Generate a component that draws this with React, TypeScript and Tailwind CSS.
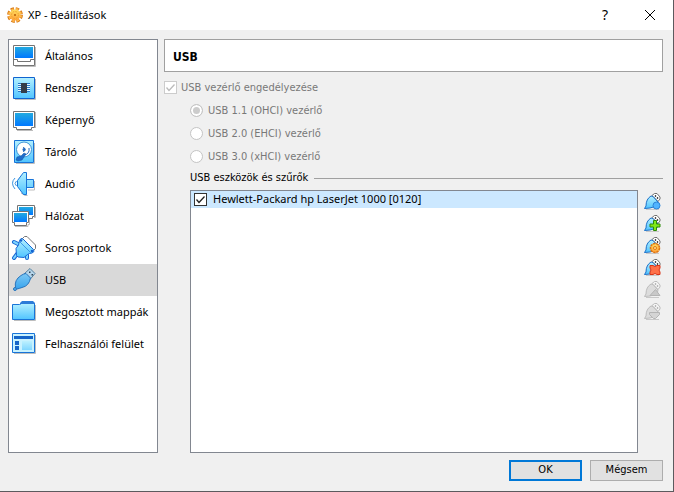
import { useState, type ReactNode } from 'react';

type IconProps = { children: ReactNode };

function Icon({ children }: IconProps) {
  return (
    <svg viewBox="0 0 24 24" className="size-6 shrink-0 overflow-visible" fill="none" aria-hidden="true">
      {children}
    </svg>
  );
}

function Gradients() {
  return (
    <svg className="absolute size-0" aria-hidden="true">
      <defs>
        <linearGradient id="screen" x1="0" y1="0" x2="0" y2="1">
          <stop offset="0" stopColor="#22aae0" />
          <stop offset="1" stopColor="#0078ff" />
        </linearGradient>
        <linearGradient id="cyan" x1="0" y1="0" x2="0" y2="1">
          <stop offset="0" stopColor="#b4f0ff" />
          <stop offset="1" stopColor="#50c4ff" />
        </linearGradient>
        <linearGradient id="plug" x1="0" y1="0" x2="0" y2="1">
          <stop offset="0" stopColor="#7cc8f4" />
          <stop offset="1" stopColor="#38a4ee" />
        </linearGradient>
        <linearGradient id="orange" x1="0" y1="0" x2="0" y2="1">
          <stop offset="0" stopColor="#ffe060" />
          <stop offset="1" stopColor="#ffa038" />
        </linearGradient>
      </defs>
    </svg>
  );
}

const icons = {
  general: (
    <Icon>
      <path d="M3 22.500h20.500V3" stroke="#bdbdbd" />
      <path d="M1.500 1.500h21v20h-21z" fill="#fff" stroke="#747474" />
      <path d="M3 3h18v11H3z" fill="url(#screen)" />
      <path d="M2 15.500h3.500v2h13v-2H22" stroke="#747474" />
    </Icon>
  ),
  system: (
    <Icon>
      <path d="M3 23.500h20.500V3" stroke="#bdbdbd" />
      <path d="M1.500 1.500h21v21h-21z" fill="url(#cyan)" stroke="#1064d0" />
      <path d="M6 7.500h12M6 9.500h12M6 11.500h12M6 13.500h12M6 15.500h12" stroke="#2878c8" />
      <path d="M6 8.500h12M6 10.500h12M6 12.500h12M6 14.500h12" stroke="#e0f8ff" />
      <path d="M9 7h6v10H9z" fill="#343c48" />
    </Icon>
  ),
  display: (
    <Icon>
      <path d="M5 22.500h16M23.500 4v16" stroke="#bdbdbd" />
      <path d="M1.500 3.500h21v16h-3v2h-15v-2h-3z" fill="#fff" stroke="#747474" />
      <path d="M3 5h18v13H3z" fill="url(#screen)" />
    </Icon>
  ),
  storage: (
    <Icon>
      <path d="M4 23.500h18.500V3" stroke="#bdbdbd" />
      <path d="M2.500 .5h19v22h-19z" fill="url(#cyan)" stroke="#1874d8" />
      <circle cx="12" cy="9.500" r="7.500" fill="#fff" stroke="#3c94d8" />
      <path d="M11 7.500a2 2 0 1 1 0 4M12 15q6-1 5-7" stroke="#2068c0" />
      <circle cx="12" cy="9.500" r="1.500" fill="#2068c0" />
      <path d="m4 20 1-3 4-1 3-3 2 1-2 3-2 3-4 1z" fill="#1c6ccc" stroke="#104c98" strokeWidth=".5" />
    </Icon>
  ),
  audio: (
    <Icon>
      <path d="m9 21 4 2.500h2.500M16 18h6.500V9" stroke="#bdbdbd" />
      <path d="M5.500 8.500 11.500 .5h3v22h-3l-6-8zM14.500 7.500h7v8h-7z" fill="url(#cyan)" stroke="#1874d8" />
      <path d="M3 6q-5 5 0 11M4.500 9q-3 2.500 0 5" stroke="#3c94e0" />
    </Icon>
  ),
  network: (
    <Icon>
      <path d="M23.500 3v10.500H22M17.500 12v8.500H16v2H3" stroke="#bdbdbd" />
      <path d="M5.500 1.500h17v11h-2v2h-13v-2h-2z" fill="#fff" stroke="#747474" />
      <path d="M7 3h14v8H7z" fill="url(#screen)" />
      <path d="M.5 7.500h16v11h-2v3h-12v-3h-2z" fill="#fff" stroke="#747474" />
      <path d="M2 9h13v9H2z" fill="url(#screen)" />
    </Icon>
  ),
  serial: (
    <Icon>
      <path d="M10 3 12.500.5H15L23.500 9v3.500l-3 3z" fill="#fff" stroke="#777" />
      <path d="m2 6 4 2M15 19v3M5 18l-3 4" stroke="#1868d4" strokeWidth="4" strokeLinecap="round" />
      <path d="m2 6 4 2M15 19v3M5 18l-3 4" stroke="#7cd4ff" strokeWidth="2" strokeLinecap="round" />
      <path
        d="M7.500 4.500 9 2.500l2 .5 10.500 10.500.5 2-2 1.500-2.500.5-2 1-3.500 3-6-.5-1.500-1.500-.5-7L6.500 9z"
        fill="url(#cyan)"
        stroke="#1868d4"
      />
      <path d="m8 6 11 11" stroke="#3c98e8" />
      <circle cx="9" cy="4.500" r="1.300" fill="#1464d0" />
      <circle cx="20" cy="15" r="1.300" fill="#1464d0" />
    </Icon>
  ),
  usb: (
    <Icon>
      <path d="m12 6 6-5.500 5 5-5 6z" fill="#b5d5ea" stroke="#54809f" />
      <path d="M17 3.500h1.500V5H17zM19.500 6H21v1.500h-1.500z" fill="#345" />
      <path d="M3.500 19.500Q2 12 9 7.500q3-2 5-2l4.500 4.500Q17 18 10 19.500 7 20.500 5 21" fill="url(#plug)" stroke="#2874bc" />
      <circle cx="3" cy="21" r="1.500" fill="#58b0ec" stroke="#2874bc" />
    </Icon>
  ),
  folder: (
    <Icon>
      <path d="M2 20.500h21.500V5" stroke="#bdbdbd" />
      <path d="M8 4V3l2-2h11l2 2v3H8z" fill="#2c7cd8" />
      <path d="M.5 4.500h7l2-1h13v16H.5z" fill="url(#cyan)" stroke="#1874d8" />
      <path d="M9 3h14v1H9z" fill="#2c7cd8" />
    </Icon>
  ),
  interface: (
    <Icon>
      <path d="M2 21.500h21.500V3" stroke="#bdbdbd" />
      <path d="M.5 1.500h22v19H.5z" fill="#c8f2ff" stroke="#1874d8" />
      <path d="M2 4h19v3H2zM3 9h4v4H3zM3 14h4v4H3z" fill="#1464c8" />
      <path d="M10 9h10v9H10z" fill="url(#cyan)" opacity=".6" />
    </Icon>
  ),
};

const sections: { name: string; icon: ReactNode }[] = [
  { name: 'Általános', icon: icons.general },
  { name: 'Rendszer', icon: icons.system },
  { name: 'Képernyő', icon: icons.display },
  { name: 'Tároló', icon: icons.storage },
  { name: 'Audió', icon: icons.audio },
  { name: 'Hálózat', icon: icons.network },
  { name: 'Soros portok', icon: icons.serial },
  { name: 'USB', icon: icons.usb },
  { name: 'Megosztott mappák', icon: icons.folder },
  { name: 'Felhasználói felület', icon: icons.interface },
];

function Gear() {
  return (
    <svg viewBox="0 0 16 16" className="size-4" fill="none" aria-hidden="true">
      <circle cx="8" cy="8" r="6.400" stroke="#d87814" strokeWidth="3" strokeDasharray="3.300 1.720" />
      <circle cx="8" cy="8" r="6" stroke="#ffb848" strokeWidth="2" strokeDasharray="2.200 2.510" strokeDashoffset="-.4" />
      <circle cx="8" cy="8" r="5.500" fill="url(#orange)" />
      <circle cx="8" cy="8" r="3.500" stroke="#f0a030" strokeDasharray="1.500 1.250" />
      <circle cx="8" cy="8" r="1" fill="#b85c08" />
    </svg>
  );
}

type FilterIconProps = { off?: boolean; children: ReactNode };

function FilterIcon({ off = false, children }: FilterIconProps) {
  return (
    <svg viewBox="0 0 17 17" className="size-[17px]" fill="none" aria-hidden="true">
      <path d="M2 16.500h13" stroke="#c8c8c8" />
      <path d="m8 2.500 2.500-2H13L16 4v2l-2 2.500z" fill={off ? '#f4f4f4' : '#fff'} stroke={off ? '#bcbcbc' : '#707070'} />
      <path d="M11 2.500h1v1h-1zM13 4.500h1v1h-1z" fill={off ? '#aaa' : '#222'} stroke={off ? '#aaa' : '#222'} strokeWidth=".5" />
      <path
        d="M.5 15.500 2 13q0-7 5-10l2 .5L14 9l-1 4-7 2z"
        fill={off ? '#dcdcdc' : 'url(#cyan)'}
        stroke={off ? '#bcbcbc' : '#1c70c8'}
      />
      {children}
    </svg>
  );
}

const actions: { name: string; off?: boolean; badge: ReactNode }[] = [
  { name: 'Üres szűrő hozzáadása', badge: <circle cx="12.500" cy="12.500" r="3.500" fill="#50b4ff" stroke="#2c84d8" /> },
  {
    name: 'Szűrő hozzáadása eszközből',
    badge: <path d="M9.500 5.500h3v3.500h3.500v3h-3.500v3.500h-3V12H6V9h3.500z" fill="#80e818" stroke="#2c8c08" />,
  },
  {
    name: 'Szűrő szerkesztése',
    badge: (
      <>
        <circle cx="11" cy="11" r="4.500" fill="url(#orange)" stroke="#e07410" strokeWidth="1.500" strokeDasharray="2.500 .6" />
        <circle cx="11" cy="11" r="1.500" fill="#fff0a0" stroke="#e07410" />
      </>
    ),
  },
  {
    name: 'Szűrő eltávolítása',
    badge: (
      <path
        d="M6 6.500h3l2 1 2-1h3V9l-1 2 1 2v2.500h-3l-2-1-2 1H6V13l1-2-1-2z"
        fill="#ff7048"
        stroke="#d83418"
      />
    ),
  },
  { name: 'Mozgatás felfelé', off: true, badge: <path d="m6 14.500 5.500-6 4.500 6z" fill="#c8c8c8" stroke="#b4b4b4" /> },
  { name: 'Mozgatás lefelé', off: true, badge: <path d="M5.500 9.500h10v2l-4 4h-2l-4-4z" fill="#d4d4d4" stroke="#b4b4b4" /> },
];

type CheckProps = { checked: boolean; disabled?: boolean; onChange?: () => void; children: ReactNode };

function Check({ checked, disabled = false, onChange, children }: CheckProps) {
  return (
    <label className="flex items-center gap-1">
      <span className="grid size-[13px] shrink-0">
        <input
          type="checkbox"
          className="col-start-1 row-start-1 size-[13px] appearance-none border border-[#333] bg-white disabled:border-[#ccc]"
          checked={checked}
          disabled={disabled}
          onChange={onChange}
        />
        {checked && (
          <svg viewBox="0 0 13 13" className="pointer-events-none col-start-1 row-start-1 size-[13px]" fill="none" aria-hidden="true">
            <path d="m2.500 6.500 2.500 3 5.500-6" stroke={disabled ? '#bbb' : '#222'} strokeWidth="1.300" />
          </svg>
        )}
      </span>
      {children}
    </label>
  );
}

const controllers = ['USB 1.1 (OHCI) vezérlő', 'USB 2.0 (EHCI) vezérlő', 'USB 3.0 (xHCI) vezérlő'];

export default function App() {
  const [current, setCurrent] = useState('USB');
  const [filterOn, setFilterOn] = useState(true);
  return (
    <div className="flex min-h-screen flex-col border-r border-b border-[#5c5a5e] bg-[#f0f0f0] font-['DejaVu_Sans_Condensed','DejaVu_Sans',sans-serif] text-[11px] text-black">
      <Gradients />
      <header className="flex h-[30px] items-center bg-white pr-[17px] pl-[7px] font-['Noto_Sans',sans-serif]">
        <Gear />
        <h1 className="ml-[5px] flex-1">XP - Beállítások</h1>
        <button className="w-3 text-sm" aria-label="Súgó">
          ?
        </button>
        <button className="ml-[33px]" aria-label="Bezárás">
          <svg viewBox="0 0 12 12" className="size-3" aria-hidden="true">
            <path d="m1 1 10 10M11 1 1 11" stroke="#000" />
          </svg>
        </button>
      </header>

      <div className="flex flex-1 gap-1.5 pt-[9px] pr-2.5 pl-2">
        <nav className="w-[150px] shrink-0 border border-[#828790] bg-white font-['Noto_Sans',sans-serif]">
          {sections.map((s) => (
            <button
              key={s.name}
              className={
                'flex h-8 w-full items-center gap-[9px] pl-[3px] whitespace-nowrap ' + (s.name === current ? 'bg-[#d9d9d9]' : '')
              }
              onClick={() => setCurrent(s.name)}
            >
              {s.icon}
              <span className="pt-px">{s.name}</span>
            </button>
          ))}
        </nav>

        <main className="flex min-w-0 flex-1 flex-col">
          <h2 className="flex h-[33px] items-center border border-[#a0a0a0] bg-white px-2 pt-0.5 text-xs font-bold">{current}</h2>
          <div className="mt-1 text-[#787878]">
            <div className="flex h-[23px] items-center">
              <Check checked disabled>
                <span className="pt-0.5">USB vezérlő engedélyezése</span>
              </Check>
            </div>
            {controllers.map((name, i) => (
              <label key={name} className="flex h-[23px] items-center gap-[5px] pl-[26px]">
                <input
                  type="radio"
                  name="controller"
                  disabled
                  defaultChecked={i === 0}
                  className="size-[13px] shrink-0 appearance-none rounded-full border border-[#c4c4c4] bg-white checked:bg-[#ccc] checked:inset-ring-2 checked:inset-ring-white"
                />
                <span className="pt-0.5">{name}</span>
              </label>
            ))}
          </div>

          <section className="flex flex-1 flex-col pl-[26px]">
            <h3 className="flex h-5 items-center gap-1.5">
              USB eszközök és szűrők
              <span className="h-px flex-1 bg-[#a0a0a0]" />
            </h3>
            <div className="mt-0.5 flex flex-1 gap-1.5">
              <ul className="flex-1 border border-[#828790] bg-white font-['Noto_Sans',sans-serif]">
                <li className="flex h-[17px] items-center bg-[#cce8ff] pl-[3px]">
                  <Check checked={filterOn} onChange={() => setFilterOn(!filterOn)}>
                    <span className="pl-0.5">Hewlett-Packard hp LaserJet 1000 [0120]</span>
                  </Check>
                </li>
              </ul>
              <div role="toolbar" aria-label="USB szűrők" className="mr-0.5 flex flex-col gap-[5px] pt-[3px]">
                {actions.map((a) => (
                  <button key={a.name} aria-label={a.name} disabled={a.off}>
                    <FilterIcon off={a.off}>{a.badge}</FilterIcon>
                  </button>
                ))}
              </div>
            </div>
          </section>
        </main>
      </div>

      <footer className="flex justify-end gap-2 pt-[7px] pr-2.5 pb-2.5">
        <button className="h-[21px] w-[73px] border-2 border-[#0078d7] bg-[#e1e1e1]">OK</button>
        <button className="h-[21px] w-[73px] border border-[#adadad] bg-[#e1e1e1]">Mégsem</button>
      </footer>
    </div>
  );
}
